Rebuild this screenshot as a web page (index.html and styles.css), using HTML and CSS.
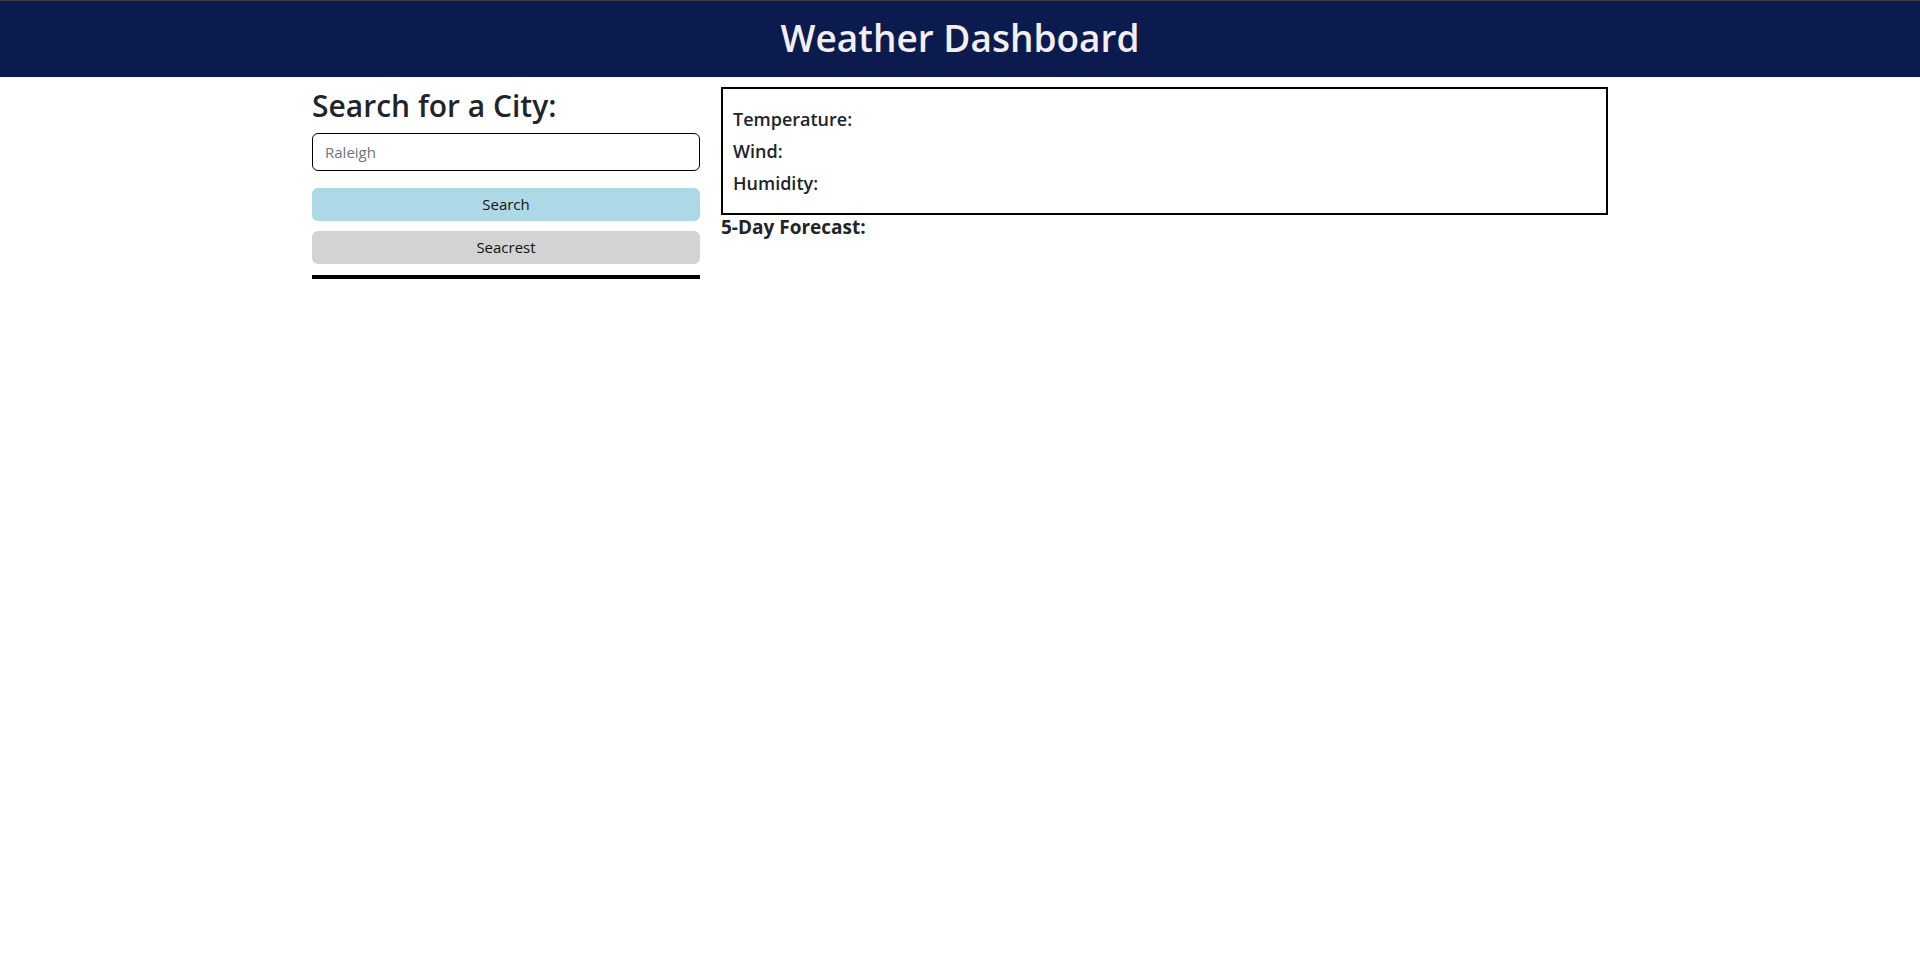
FILE: index.html
```html
<!DOCTYPE html>
<html lang="en">
<head>
<meta charset="utf-8">
<title>Weather Dashboard</title>
<link rel="stylesheet" href="styles.css">
</head>
<body>
<header class="topbar">
  <h1 class="title">Weather Dashboard</h1>
</header>
<main class="layout">
  <aside class="sidebar">
    <h2 class="search-title">Search for a City:</h2>
    <input class="city-input" type="text" placeholder="Raleigh">
    <button class="btn btn-search" type="button">Search</button>
    <button class="btn btn-history" type="button">Seacrest</button>
    <div class="divider"></div>
  </aside>
  <section class="content">
    <div class="current">
      <h5 class="stat">Temperature:</h5>
      <h5 class="stat">Wind:</h5>
      <h5 class="stat">Humidity:</h5>
    </div>
    <div class="forecast-title">5-Day Forecast:</div>
  </section>
</main>
</body>
</html>
```
FILE: styles.css
```css
* { box-sizing: border-box; }
body {
  margin: 0;
  font-family: "Open Sans", "Noto Sans", sans-serif;
  color: #212529;
  background: #fff;
}
.topbar {
  background: #0c1b4e;
  border-top: 1px solid #3a3a3a;
  height: 77px;
  display: flex;
  align-items: center;
  justify-content: center;
}
.title {
  margin: 0;
  font-size: 37px;
  font-weight: 600;
  line-height: 1.2;
  color: #f3eff0;
  padding-bottom: 2px;
}
.layout {
  width: 1296px;
  margin: 0 auto;
  padding-top: 10px;
  display: flex;
  align-items: flex-start;
}
.sidebar {
  width: 388px;
  margin-right: 21px;
  display: flex;
  flex-direction: column;
}
.search-title {
  margin: 0 0 8px;
  font-size: 30px;
  font-weight: 600;
  line-height: 38.4px;
}
.city-input {
  height: 38px;
  border: 1px solid #000;
  border-radius: 6px;
  padding: 6px 12px;
  font-family: inherit;
  font-size: 15px;
  margin-bottom: 17px;
}
.city-input::placeholder { color: #6c757d; }
.btn {
  height: 33px;
  border: none;
  border-radius: 6px;
  font-family: inherit;
  font-size: 15px;
  color: #111;
  padding: 0 0 2px;
}
.btn-search { background: #add8e6; margin-bottom: 10px; }
.btn-history { background: #d3d3d3; margin-bottom: 11px; }
.divider {
  height: 4px;
  background: #000;
}
.content {
  flex: 1;
}
.current {
  border: 2px solid #000;
  padding: 18px 10px 10px;
}
.stat {
  margin: 0 0 8px;
  font-size: 18px;
  font-weight: 600;
  line-height: 24px;
}
.forecast-title {
  font-size: 19px;
  font-weight: 700;
  line-height: 25px;
}
```
